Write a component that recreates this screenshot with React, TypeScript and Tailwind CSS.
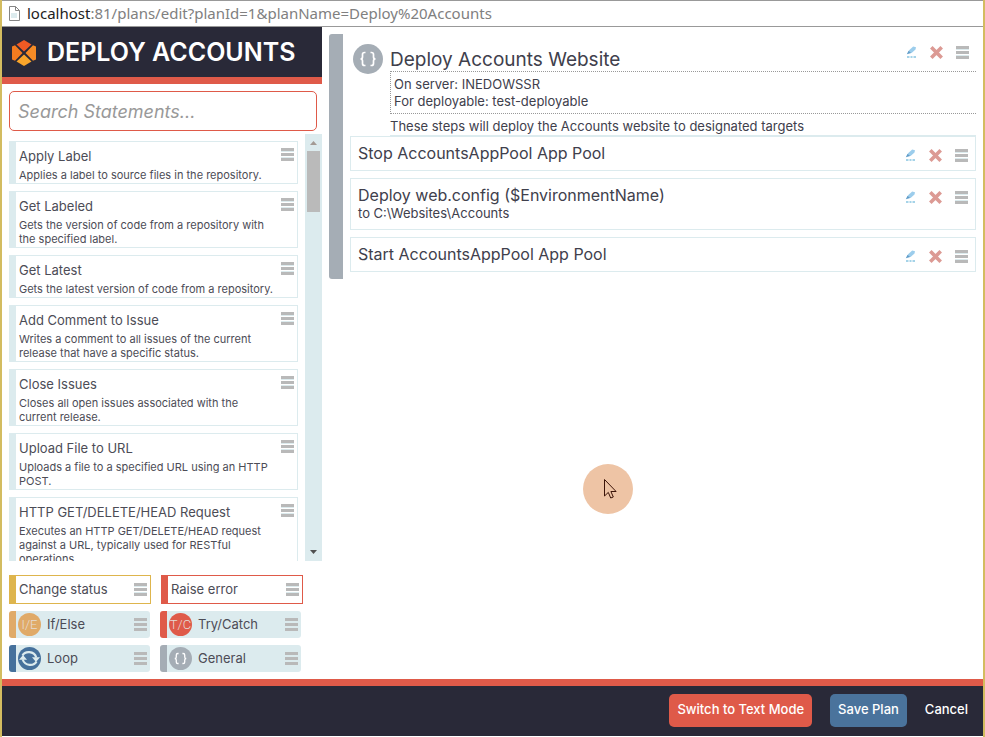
import type { ReactNode } from "react";

const statements = [
  { title: "Apply Label", text: "Applies a label to source files in the repository." },
  { title: "Get Labeled", text: "Gets the version of code from a repository with the specified label." },
  { title: "Get Latest", text: "Gets the latest version of code from a repository." },
  { title: "Add Comment to Issue", text: "Writes a comment to all issues of the current release that have a specific status." },
  { title: "Close Issues", text: "Closes all open issues associated with the current release." },
  { title: "Upload File to URL", text: "Uploads a file to a specified URL using an HTTP POST." },
  { title: "HTTP GET/DELETE/HEAD Request", text: "Executes an HTTP GET/DELETE/HEAD request against a URL, typically used for RESTful operations." },
];

const steps = [
  { title: "Stop AccountsAppPool App Pool", detail: "" },
  { title: "Deploy web.config ($EnvironmentName)", detail: "to C:\\Websites\\Accounts" },
  { title: "Start AccountsAppPool App Pool", detail: "" },
];

function Handle() {
  return (
    <button type="button" aria-label="Menu" className="block h-[13px] w-[13px] shrink-0">
      <svg viewBox="0 0 13 13" className="block h-[13px] w-[13px]">
        <path fill="#dcebee" d="M0 3h13v1H0zM0 9h13v1H0z" />
        <path fill="#b9b9b9" d="M0 0h13v3H0zM0 5h13v3H0zM0 10h13v3H0z" />
      </svg>
    </button>
  );
}

function Actions() {
  return (
    <div className="flex shrink-0 gap-[13px]">
      <button type="button" aria-label="Edit" className="block h-[13px] w-[11px]">
        <svg viewBox="0 0 11 13" className="block h-[13px] w-[11px]">
          <path fill="#9ccdec" d="M2.800 4.600L7.200.4 10 1.200 9.500 3.400 5.600 7 3.600 6.600z" />
          <path fill="#5f9cc9" d="M.8 8.200L2.600 4.800 5.200 7z" />
          <path fill="#a5d3e8" d="M1 10h2.500v2H1zM4.500 10h2v2h-2zM7.500 10H10v2H7.500z" />
        </svg>
      </button>
      <button type="button" aria-label="Delete" className="block h-[13px] w-[13px]">
        <svg viewBox="0 0 13 13" className="block h-[13px] w-[13px]">
          <path stroke="#dc9a94" strokeWidth="3.600" d="M1.300 1.300l10.400 10.400M11.700 1.300L1.300 11.700" />
        </svg>
      </button>
      <Handle />
    </div>
  );
}

function Braces({ className }: { className: string }) {
  return (
    <svg viewBox="0 0 30 30" className={className} fill="none" stroke="#fff" strokeWidth="1.700">
      <circle cx="15" cy="15" r="15" fill="#a5adb5" stroke="none" />
      <path d="M12.500 8.500h-1c-1.500 0-2 .8-2 2v2.500c0 1.300-.6 2-2 2 1.400 0 2 .7 2 2v2.500c0 1.200.5 2 2 2h1M17.500 8.500h1c1.500 0 2 .8 2 2v2.500c0 1.300.6 2 2 2-1.400 0-2 .7-2 2v2.500c0 1.200-.5 2-2 2h-1" />
    </svg>
  );
}

function LoopIcon() {
  return (
    <svg viewBox="0 0 23 23" className="h-[23px] w-[23px] shrink-0">
      <circle cx="11.500" cy="11.500" r="11.500" fill="#46719c" />
      <g fill="none" stroke="#dcebee" strokeWidth="2.200">
        <path d="M4.500 8.500C7 3.800 16 3.600 18.300 10.500" />
        <path d="M18.500 14.500C16 19.200 7 19.400 4.700 12.500" />
      </g>
      <path fill="#dcebee" d="M14 10.300h8L18 15zM9 12.700H1L5 8z" />
    </svg>
  );
}

function Badge({ color, label }: { color: string; label: string }) {
  return (
    <span className={`flex h-[23px] w-[23px] shrink-0 items-center justify-center overflow-hidden rounded-full font-[Roboto,sans-serif] text-[13px] font-light text-[#e6dcd4] ${color}`}>
      {label}
    </span>
  );
}

function Block({ edge, label, icon }: { edge: string; label: string; icon: ReactNode }) {
  return (
    <div className={`flex h-[27px] w-[141px] items-center rounded-[3px] border-l-[7px] bg-[#dcebee] pr-[3px] pl-[2px] ${edge}`}>
      {icon}
      <span className="ml-[6px] flex-1 text-[13px]">{label}</span>
      <Handle />
    </div>
  );
}

export default function App() {
  return (
    <div className="flex h-screen flex-col border-x-2 border-[#d3bc60] bg-white font-[Inter,sans-serif] text-[#4c4c56]">
      <div className="flex h-[27px] shrink-0 items-center border-y border-[#999] pl-[6px] font-['Noto_Sans',sans-serif] text-[15px] text-[#808080]">
        <svg viewBox="0 0 13 15" className="mr-[6px] h-[15px] w-[13px]" fill="#fff" stroke="#858585">
          <path d="M1.500.5h6l4 4v10h-10z" />
          <path fill="none" d="M7.500.5v4h4" />
          <path fill="#dcebee" stroke="none" d="M3 7h6v5H3z" />
        </svg>
        <span><span className="text-[#222]">localhost</span>:81/plans/edit?planId=1&amp;planName=Deploy%20Accounts</span>
      </div>

      <div className="flex min-h-0 flex-1">
        <aside className="flex w-[320px] shrink-0 flex-col">
          <header className="flex h-[57px] shrink-0 items-center gap-[11px] border-b-[7px] border-[#df5a49] bg-[#292938] pt-px pl-[10px]">
            <svg viewBox="0 0 24 26" className="h-[26px] w-[24px]">
              <path fill="#f15a24" d="M12 0l7.500 4.500L12 11.500 4.500 4.500z" />
              <path fill="#f9a52b" d="M12 14.500l7.500 7L12 26l-7.500-4.500z" />
              <path fill="#f47b20" d="M0 6.500L3 5.300l7.500 7.700L3 20.700 0 19.500z" />
              <path fill="#f68b26" d="M24 6.500l-3-1.200-7.500 7.700 7.500 7.700 3-1.200z" />
            </svg>
            <h1 className="text-[25px] font-semibold whitespace-nowrap text-white">DEPLOY ACCOUNTS</h1>
          </header>

          <div className="shrink-0 px-[7px] pt-[7px] pr-[5px] pb-[3px]">
            <input
              type="text"
              aria-label="Search Statements"
              placeholder="Search Statements..."
              className="block h-[40px] w-full rounded-[5px] border border-[#df5a49] px-2 text-[18px] italic outline-none placeholder:text-[#999]"
            />
          </div>

          <div className="flex min-h-0 flex-1 justify-between">
            <ul className="flex w-[296px] flex-col gap-[7px] overflow-y-auto pt-[7px] pl-[7px] [scrollbar-width:none]">
              {statements.map((s) => (
                <li key={s.title} className="w-[289px] shrink-0 border border-l-[7px] border-[#dcebee] pt-1 pr-[3px] pb-px pl-[3px]">
                  <div className="flex items-start justify-between">
                    <h2 className="text-[13px] leading-[20px]">{s.title}</h2>
                    <div className="pt-[2px]"><Handle /></div>
                  </div>
                  <p className="mt-[2px] pr-[18px] text-[11px] leading-[14px]">{s.text}</p>
                </li>
              ))}
            </ul>
            <div className="flex w-[17px] flex-col items-center justify-between bg-[#dcebee] py-[7px]">
              <svg viewBox="0 0 7 4" className="h-[4px] w-[7px]"><path fill="#a39a94" d="M0 4L3.500 0 7 4z" /></svg>
              <div className="mt-[6px] mb-auto h-[61px] w-[13px] bg-[#bababa]" />
              <svg viewBox="0 0 7 4" className="h-[4px] w-[7px]"><path fill="#505050" d="M0 0h7L3.500 4z" /></svg>
            </div>
          </div>

          <div className="flex shrink-0 flex-col gap-[7px] px-[7px] pt-[14px] pb-[7px]">
            <div className="flex gap-[10px] text-[13px]">
              <div className="flex h-[29px] w-[142px] items-center justify-between border border-l-[7px] border-[#deb54d] px-[3px]">Change status<Handle /></div>
              <div className="flex h-[29px] w-[142px] items-center justify-between border border-l-[7px] border-[#df5a49] px-[3px]">Raise error<Handle /></div>
            </div>
            <div className="flex gap-[10px]">
              <Block edge="border-[#e0aa68]" label="If/Else" icon={<Badge color="bg-[#e0aa68]" label="I/E" />} />
              <Block edge="border-[#df5a49]" label="Try/Catch" icon={<Badge color="bg-[#df5a49]" label="T/C" />} />
            </div>
            <div className="flex gap-[10px]">
              <Block edge="border-[#46719c]" label="Loop" icon={<LoopIcon />} />
              <Block edge="border-[#a5adb5]" label="General" icon={<Braces className="h-[23px] w-[23px] shrink-0" />} />
            </div>
          </div>
        </aside>

        <main className="relative min-w-0 flex-1 p-[7px] text-[#40404c]">
          <section className="rounded-l-[3px] border-l-[14px] border-[#a5adb5] pb-[7px] pl-[7px]">
            <div className="flex gap-[7px] pt-[10px] pl-[3px]">
              <Braces className="h-[30px] w-[30px] shrink-0" />
              <div className="flex-1 border-b border-[#dcebee]">
                <div className="flex h-[27px] items-start justify-between pt-[2px] pr-[7px]">
                  <h2 className="text-[19px] leading-[28px]">Deploy Accounts Website</h2>
                  <Actions />
                </div>
                <div className="border-y border-l border-dotted border-[#999] pt-1 pb-[3px] pl-[3px] text-[13px] leading-[17px]">
                  <p>On server: INEDOWSSR</p>
                  <p>For deployable: test-deployable</p>
                </div>
                <p className="pt-[4px] text-[13px] leading-[17px]">These steps will deploy the Accounts website to designated targets</p>
              </div>
            </div>
            <ul className="flex flex-col gap-[7px]">
              {steps.map((s) => (
                <li key={s.title} className="flex items-start justify-between border border-[#dcebee] px-[7px] pb-[7px]">
                  <div className="pt-[6px]">
                    <h3 className="text-[16px] leading-[20px]">{s.title}</h3>
                    {s.detail && <p className="text-[13px] leading-[17px]">{s.detail}</p>}
                  </div>
                  <div className="pt-3"><Actions /></div>
                </li>
              ))}
            </ul>
          </section>

          <div className="absolute top-[437px] left-[261px] h-[50px] w-[50px] rounded-full bg-[#eec4a5]">
            <svg viewBox="0 0 13 20" className="mt-[15px] ml-[21px] h-[20px] w-[13px]" fill="#eec4a5" stroke="#3c1408">
              <path d="M.5.5v16.500l3.800-3.600 2.400 5.600 2.600-1-2.400-5.500h5.200z" />
            </svg>
          </div>
        </main>
      </div>

      <footer className="mb-px flex h-[57px] shrink-0 items-center justify-end gap-[18px] border-t-[7px] border-[#df5a49] bg-[#292938] pr-[15px] pb-[2px] text-[13px] font-medium text-white">
        <button type="button" className="h-[33px] rounded-[5px] bg-[#df5a49] px-2">Switch to Text Mode</button>
        <button type="button" className="h-[33px] rounded-[5px] bg-[#4a739c] px-2">Save Plan</button>
        <button type="button">Cancel</button>
      </footer>
    </div>
  );
}
